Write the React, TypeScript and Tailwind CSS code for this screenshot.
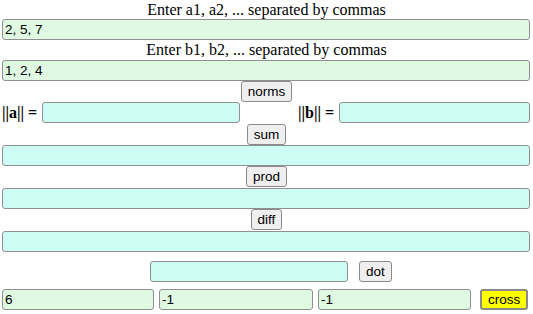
import React from 'react'

const serif = { fontFamily: '"Liberation Serif", "Times New Roman", serif' }

const inputCls = 'h-[21px] border border-[#8f8f8f] rounded-[3px] px-[2px] text-[13.5px] text-black outline-none font-["Liberation_Sans",Arial,sans-serif]'
const greenIn = inputCls + ' bg-[#dff9e3]'
const cyanIn = inputCls + ' bg-[#cdfcf5]'
const btnCls = 'h-[21px] px-[6px] border border-[#8a8a8a] rounded-[3px] bg-[#efefef] text-[13.5px] text-black leading-none font-["Liberation_Sans",Arial,sans-serif]'

const Btn = ({ label }: { label: string }) => (
    <div className="flex justify-center">
        <button className={btnCls}>{label}</button>
    </div>
)

export default function App() {
    return (
        <div className="w-[533px] h-[314px] bg-white text-black overflow-hidden">
            <div className="text-center text-[16px] leading-[19px] h-[19px]" style={serif}>Enter a1, a2, ... separated by commas</div>
            <input className={greenIn + ' ml-[2px] w-[528px] block'} defaultValue="2, 5, 7" />
            <div className="text-center text-[16px] leading-[19px] h-[20px]" style={serif}>Enter b1, b2, ... separated by commas</div>
            <input className={greenIn + ' ml-[2px] w-[528px] block'} defaultValue="1, 2, 4" />

            <Btn label="norms" />
            <div className="flex items-center h-[21px] text-[16px]" style={serif}>
                <span className="ml-[2px] font-bold w-[40px]">||<b>a</b>|| =</span>
                <input className={cyanIn + ' w-[198px]'} />
                <span className="ml-[58px] font-bold w-[41px]">||<b>b</b>|| =</span>
                <input className={cyanIn + ' w-[191px]'} />
            </div>

            <div className="mt-[1px]"><Btn label="sum" /></div>
            <input className={cyanIn + ' ml-[2px] w-[528px] block'} />
            <Btn label="prod" />
            <input className={cyanIn + ' ml-[2px] w-[528px] block mt-[1px]'} />
            <Btn label="diff" />
            <input className={cyanIn + ' ml-[2px] w-[528px] block mt-[1px]'} />

            <div className="flex items-center mt-[9px] h-[21px]">
                <input className={cyanIn + ' ml-[150px] w-[198px]'} />
                <button className={btnCls + ' ml-[11px]'}>dot</button>
            </div>

            <div className="flex items-center mt-[7px] h-[21px]">
                <input className={greenIn + ' ml-[2px] w-[152px]'} defaultValue="6" />
                <input className={greenIn + ' ml-[5px] w-[154px]'} defaultValue="-1" />
                <input className={greenIn + ' ml-[5px] w-[153px]'} defaultValue="-1" />
                <button className={btnCls + ' ml-[9px] px-[2px] border-[2px] bg-[#ffff00]'}>cross</button>
            </div>
        </div>
    )
}
